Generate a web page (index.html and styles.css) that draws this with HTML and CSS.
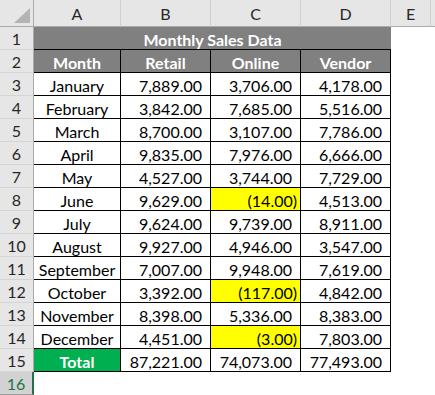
FILE: index.html
```html
<html>
<head>
<title>Monthly Sales Data</title>
<link rel="stylesheet" href="styles.css">
</head>
<body>
<div class="sheet">
	<div class="colheads">
		<div class="corner">
			<svg width="16" height="15" viewBox="0 0 16 15"><polygon points="16,0 16,15 0,15" fill="#b4b4b4"/></svg>
		</div>
		<div class="colhead a">A</div>
		<div class="colhead b">B</div>
		<div class="colhead c">C</div>
		<div class="colhead d">D</div>
		<div class="colhead e">E</div>
		<div class="colhead rest"></div>
	</div>

	<div class="row">
		<div class="rowhead">1</div>
		<div class="cell title">Monthly Sales Data</div>
	</div>
	<div class="row">
		<div class="rowhead">2</div>
		<div class="cell a head">Month</div>
		<div class="cell b head">Retail</div>
		<div class="cell c head">Online</div>
		<div class="cell d head">Vendor</div>
	</div>
	<div class="row">
		<div class="rowhead">3</div>
		<div class="cell a">January</div>
		<div class="cell b num">7,889.00</div>
		<div class="cell c num">3,706.00</div>
		<div class="cell d num">4,178.00</div>
	</div>
	<div class="row">
		<div class="rowhead">4</div>
		<div class="cell a">February</div>
		<div class="cell b num">3,842.00</div>
		<div class="cell c num">7,685.00</div>
		<div class="cell d num">5,516.00</div>
	</div>
	<div class="row">
		<div class="rowhead">5</div>
		<div class="cell a">March</div>
		<div class="cell b num">8,700.00</div>
		<div class="cell c num">3,107.00</div>
		<div class="cell d num">7,786.00</div>
	</div>
	<div class="row">
		<div class="rowhead">6</div>
		<div class="cell a">April</div>
		<div class="cell b num">9,835.00</div>
		<div class="cell c num">7,976.00</div>
		<div class="cell d num">6,666.00</div>
	</div>
	<div class="row">
		<div class="rowhead">7</div>
		<div class="cell a">May</div>
		<div class="cell b num">4,527.00</div>
		<div class="cell c num">3,744.00</div>
		<div class="cell d num">7,729.00</div>
	</div>
	<div class="row">
		<div class="rowhead">8</div>
		<div class="cell a">June</div>
		<div class="cell b num">9,629.00</div>
		<div class="cell c num neg">(14.00)</div>
		<div class="cell d num">4,513.00</div>
	</div>
	<div class="row">
		<div class="rowhead">9</div>
		<div class="cell a">July</div>
		<div class="cell b num">9,624.00</div>
		<div class="cell c num">9,739.00</div>
		<div class="cell d num">8,911.00</div>
	</div>
	<div class="row">
		<div class="rowhead">10</div>
		<div class="cell a">August</div>
		<div class="cell b num">9,927.00</div>
		<div class="cell c num">4,946.00</div>
		<div class="cell d num">3,547.00</div>
	</div>
	<div class="row">
		<div class="rowhead">11</div>
		<div class="cell a">September</div>
		<div class="cell b num">7,007.00</div>
		<div class="cell c num">9,948.00</div>
		<div class="cell d num">7,619.00</div>
	</div>
	<div class="row">
		<div class="rowhead">12</div>
		<div class="cell a">October</div>
		<div class="cell b num">3,392.00</div>
		<div class="cell c num neg">(117.00)</div>
		<div class="cell d num">4,842.00</div>
	</div>
	<div class="row">
		<div class="rowhead">13</div>
		<div class="cell a">November</div>
		<div class="cell b num">8,398.00</div>
		<div class="cell c num">5,336.00</div>
		<div class="cell d num">8,383.00</div>
	</div>
	<div class="row">
		<div class="rowhead">14</div>
		<div class="cell a">December</div>
		<div class="cell b num">4,451.00</div>
		<div class="cell c num neg">(3.00)</div>
		<div class="cell d num">7,803.00</div>
	</div>
	<div class="row">
		<div class="rowhead">15</div>
		<div class="cell a total">Total</div>
		<div class="cell b num">87,221.00</div>
		<div class="cell c num">74,073.00</div>
		<div class="cell d num">77,493.00</div>
	</div>
	<div class="row">
		<div class="rowhead selected">16</div>
	</div>
</div>
</body>
</html>
```

FILE: styles.css
```css
body {
	margin: 0;
	background: #ffffff;
	font-family: Lato, "Liberation Sans", sans-serif;
	font-size: 16px;
	color: #000000;
}
.sheet {
	display: flex;
	flex-direction: column;
}
.colheads {
	display: flex;
	height: 27px;
	background: #e6e6e6;
}
.corner {
	width: 34px;
	box-sizing: border-box;
	border-right: 1px solid #ababab;
	border-bottom: 1px solid #ababab;
	display: flex;
	align-items: flex-end;
	justify-content: flex-end;
	padding: 0 3px 3px 0;
}
.colhead {
	box-sizing: border-box;
	border-right: 1px solid #d0d0d0;
	border-bottom: 1px solid #ababab;
	display: flex;
	align-items: center;
	justify-content: center;
	color: #262626;
	padding-top: 1px;
}
.colhead.rest {
	flex: 1;
	border-right: none;
}
.a { width: 87px; }
.b, .c, .d { width: 90px; }
.e { width: 40px; }

.row {
	display: flex;
	height: 23px;
}
.rowhead {
	width: 34px;
	box-sizing: border-box;
	background: #e6e6e6;
	border-right: 1px solid #ababab;
	border-bottom: 1px solid #d4d4d4;
	display: flex;
	align-items: center;
	justify-content: center;
	color: #262626;
	padding-top: 1px;
}
.rowhead.selected {
	background: #d2d2d2;
	color: #217346;
	border-right: 2px solid #217346;
	border-bottom: 1px solid #9b9b9b;
}
.cell {
	box-sizing: border-box;
	border-right: 1px solid #000000;
	border-bottom: 1px solid #000000;
	display: flex;
	align-items: center;
	justify-content: center;
	padding-top: 2px;
	white-space: nowrap;
}
.title {
	width: 357px;
	border-right: none;
	background: #808080;
	color: #ffffff;
	font-weight: bold;
}
.head {
	background: #808080;
	color: #ffffff;
	font-weight: bold;
}
.num {
	justify-content: flex-end;
	padding-right: 8px;
}
.num.neg {
	background: #ffff00;
	padding-right: 3px;
}
.total {
	background: #00b050;
	color: #ffffff;
	font-weight: bold;
}
```
